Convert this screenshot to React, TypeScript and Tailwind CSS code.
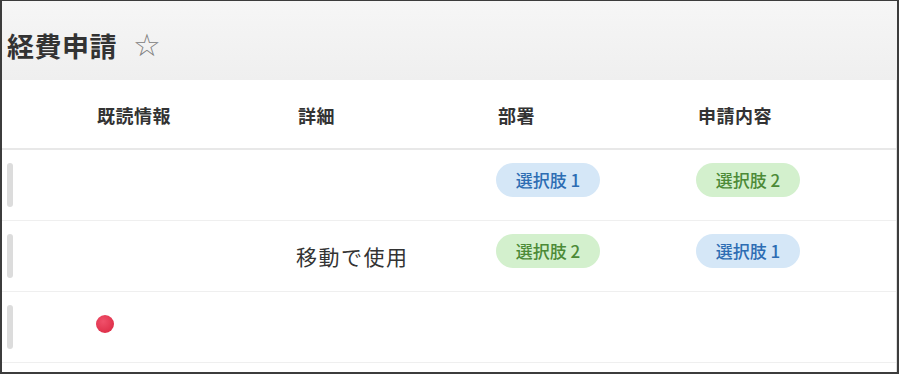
const font = { fontFamily: '"Noto Sans CJK JP", "Noto Sans", sans-serif' };

function Pill({ label, color }: { label: string; color: 'blue' | 'green' }) {
  return (
    <span
      className={`inline-flex h-[34px] w-[104px] items-center justify-center rounded-full text-[17px] font-medium ${
        color === 'blue' ? 'bg-[#d5e7f7] text-[#2d6db3]' : 'bg-[#d3f0cd] text-[#4c8a37]'
      }`}
    >
      {label}
    </span>
  );
}

function Handle() {
  return (
    <div className="flex h-full w-[94px] shrink-0 items-center pl-[5px]">
      <div className="h-[44px] w-[6px] rounded-full bg-[#dcdcdc]" />
    </div>
  );
}

type Row = {
  read?: boolean;
  detail?: string;
  dept?: { label: string; color: 'blue' | 'green' };
  content?: { label: string; color: 'blue' | 'green' };
};

const rows: Row[] = [
  { dept: { label: '選択肢 1', color: 'blue' }, content: { label: '選択肢 2', color: 'green' } },
  { detail: '移動で使用', dept: { label: '選択肢 2', color: 'green' }, content: { label: '選択肢 1', color: 'blue' } },
  { read: true },
];

export default function App() {
  return (
    <div className="h-[375px] w-[900px] overflow-hidden bg-white" style={font}>
      <div className="flex h-[374px] w-[899px] flex-col border-2 border-t border-[#3c3c3c]">
        <div className="flex h-[79px] shrink-0 items-center gap-[16px] bg-gradient-to-b from-[#f6f6f6] to-[#efefef] pl-[5px] pt-[10px]">
          <h1 className="text-[27px] font-bold leading-none tracking-[0.5px] text-[#333]">経費申請</h1>
          <span className="text-[31px] leading-none text-[#808080]" style={{ fontFamily: '"DejaVu Sans", sans-serif' }}>
            ☆
          </span>
        </div>

        <div className="flex flex-1 flex-col border-r border-[#dedede]">
          <div className="flex h-[70px] shrink-0 items-center border-b-2 border-[#e8e8e8] pt-[3px] text-[18px] font-bold text-[#333]">
            <div className="w-[95px] shrink-0" />
            <div className="w-[200px] shrink-0 tracking-[0.5px]">既読情報</div>
            <div className="w-[200px] shrink-0 pl-px tracking-[0.5px]">詳細</div>
            <div className="w-[200px] shrink-0 pl-px tracking-[0.5px]">部署</div>
            <div className="w-[200px] shrink-0 pl-px tracking-[0.5px]">申請内容</div>
          </div>

          {rows.map((r, i) => (
            <div key={i} className="flex h-[71px] shrink-0 items-center border-b border-[#efefef]">
              <Handle />
              <div className="flex w-[200px] shrink-0 items-center pb-[6px]">
                {r.read && (
                  <span className="h-[18px] w-[18px] rounded-full bg-[radial-gradient(circle_at_40%_35%,#f0506a,#d9253f)]" />
                )}
              </div>
              <div className="flex w-[200px] shrink-0 items-center pt-[2px]">
                {r.detail && <span className="text-[21px] tracking-[1.5px] text-[#333]">{r.detail}</span>}
              </div>
              <div className="flex w-[200px] shrink-0 items-center pb-[10px]">
                {r.dept && <Pill {...r.dept} />}
              </div>
              <div className="flex w-[200px] shrink-0 items-center pb-[10px]">
                {r.content && <Pill {...r.content} />}
              </div>
            </div>
          ))}
        </div>
      </div>
    </div>
  );
}
